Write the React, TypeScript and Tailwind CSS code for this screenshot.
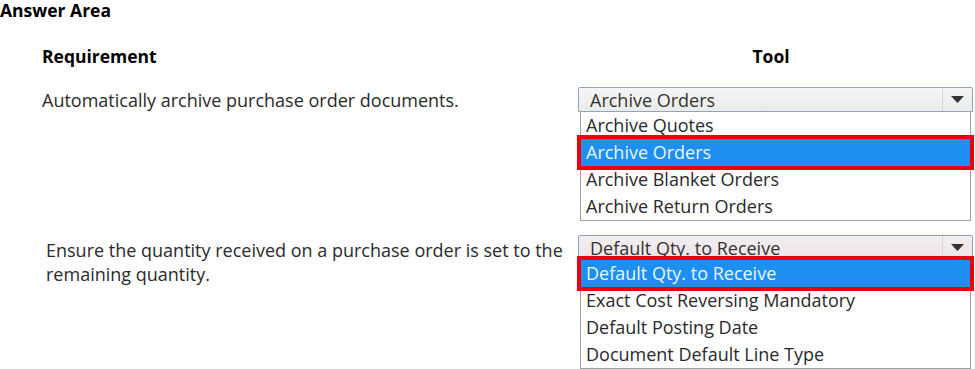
import React from "react";

type Question = {
  requirement: string[];
  selected: string;
  options: string[];
  answer: number;
  tint: string;
};

const QUESTIONS: Question[] = [
  {
    requirement: ["Automatically archive purchase order documents."],
    selected: "Archive Orders",
    options: ["Archive Quotes", "Archive Orders", "Archive Blanket Orders", "Archive Return Orders"],
    answer: 1,
    tint: "from-[#f6f6f6] to-[#ebebeb]",
  },
  {
    requirement: ["Ensure the quantity received on a purchase order is set to the", "remaining quantity."],
    selected: "Default Qty. to Receive",
    options: [
      "Default Qty. to Receive",
      "Exact Cost Reversing Mandatory",
      "Default Posting Date",
      "Document Default Line Type",
    ],
    answer: 0,
    tint: "from-[#f5eff1] to-[#ece4e7]",
  },
];

function Dropdown({ q }: { q: Question }) {
  return (
    <div className="flex flex-col">
      <div className={`flex h-[25px] items-stretch rounded-t-[2px] border border-[#8ea3c9] bg-gradient-to-b ${q.tint}`}>
        <div className="flex-1 pl-[11px] leading-[25px] text-[#333]">{q.selected}</div>
        <div className="flex w-[30px] items-center justify-center border-l border-[#d6d6d6]">
          <svg width="13" height="8" viewBox="0 0 13 8">
            <path d="M0 0 L13 0 L6.5 7 Z" fill="#333" />
          </svg>
        </div>
      </div>
      <div className="mx-[2px] flex flex-col border-x border-b border-[#a0a0a0] bg-white">
        {q.options.map((opt, i) =>
          i === q.answer ? (
            <div
              key={i}
              className="relative z-10 h-[27px] bg-[#1e8ef0] pl-[5px] leading-[27px] text-[#eaf6ff] outline-[4px] outline-[#e8000b] outline-solid"
            >
              {opt}
            </div>
          ) : (
            <div key={i} className="h-[27px] pl-[5px] leading-[27px] text-[#2a2a2a]">
              {opt}
            </div>
          )
        )}
      </div>
    </div>
  );
}

export default function App() {
  return (
    <div className="h-[369px] w-[975px] overflow-hidden bg-white font-['Open_Sans',sans-serif] text-[18px] text-[#2a2a2a]">
      <div className="text-[17.5px] leading-[20px] font-bold text-black">Answer Area</div>
      <div className="mt-[24px] grid grid-cols-[536px_395px] pl-[42px] text-[17.5px] leading-[24px] font-bold text-black">
        <div>Requirement</div>
        <div className="mr-[9px] text-center">Tool</div>
      </div>
      <div className="mt-[19px] grid grid-cols-[536px_395px] pl-[42px]">
        <div className="pt-[1px] leading-[24px]">{QUESTIONS[0].requirement[0]}</div>
        <Dropdown q={QUESTIONS[0]} />
      </div>
      <div className="mt-[14px] grid grid-cols-[532px_395px] pl-[46px]">
        <div className="pt-[3px] leading-[24px]">
          {QUESTIONS[1].requirement.map((l, i) => (
            <div key={i}>{l}</div>
          ))}
        </div>
        <Dropdown q={QUESTIONS[1]} />
      </div>
    </div>
  );
}
